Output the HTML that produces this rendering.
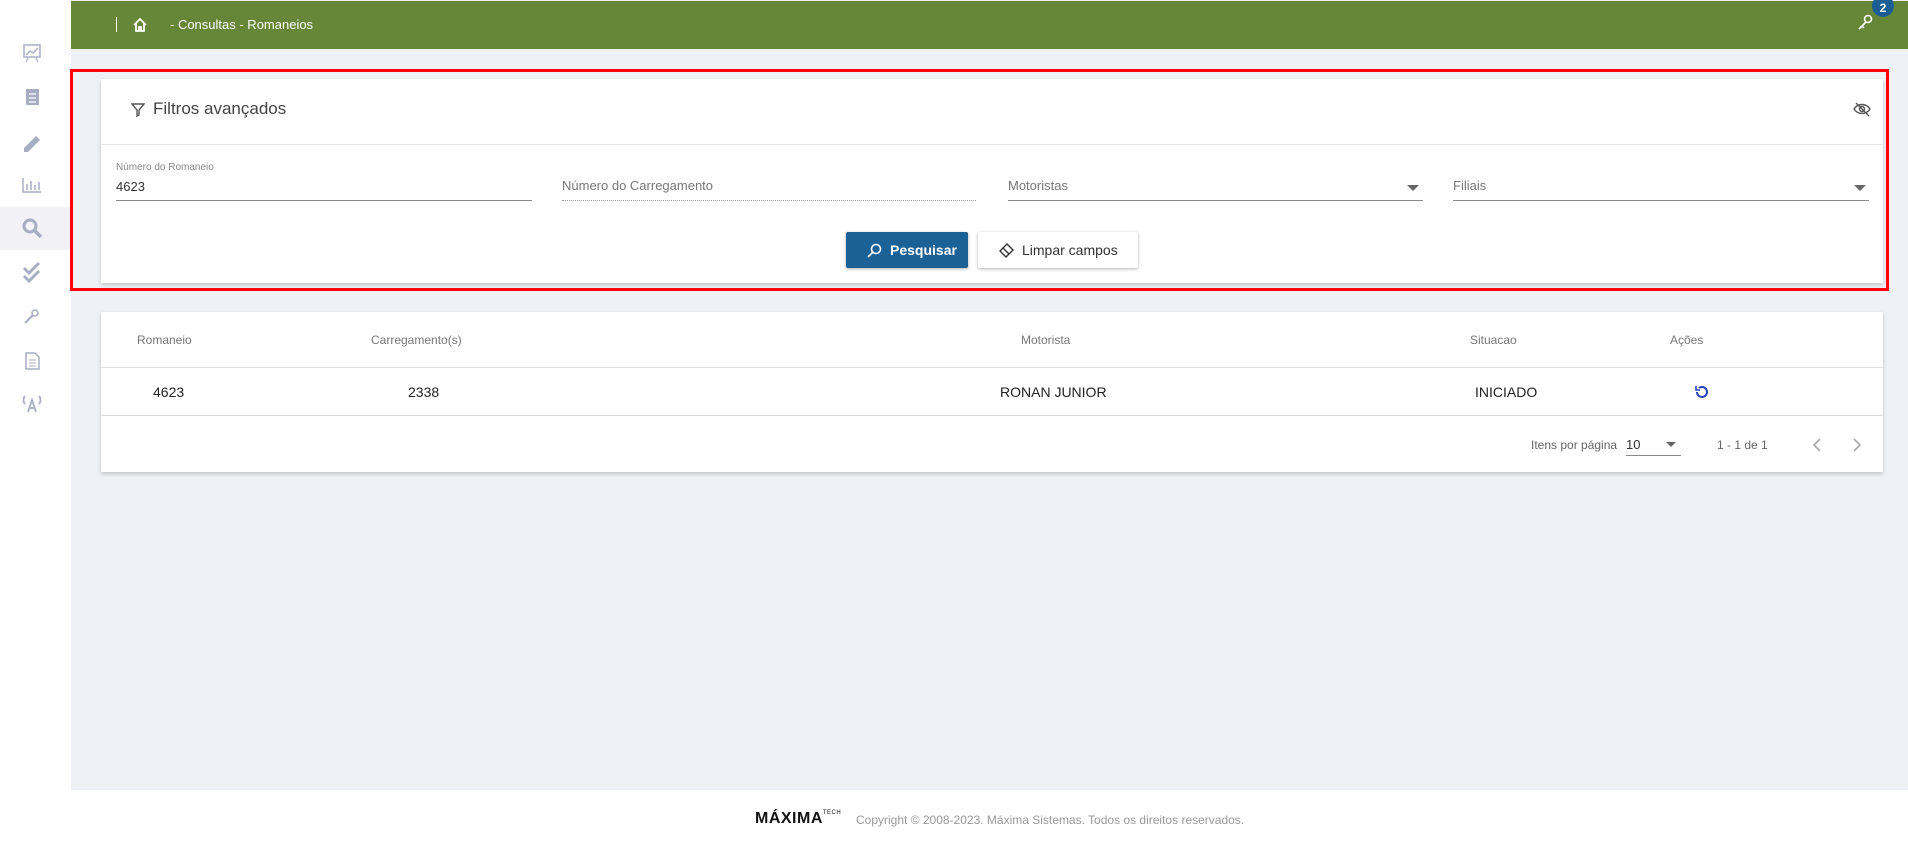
<!DOCTYPE html>
<html><head><meta charset="utf-8"><style>
*{box-sizing:border-box;margin:0;padding:0}
body{width:1908px;height:842px;overflow:hidden;background:#fff;font-family:"Liberation Sans",sans-serif;position:relative;color:#333}
.abs{position:absolute}
#side{left:0;top:0;width:71px;height:790px;background:#fff}
#main{left:71px;top:0;width:1837px;height:790px;background:#f0f1f6}
#hdr{left:71px;top:1px;width:1837px;height:48px;background:#658737}
.card{background:#fff;box-shadow:0 2px 4px rgba(0,0,0,.2)}
.t{position:absolute;white-space:nowrap}
.ul{position:absolute;height:1px;background:#8a8a8a}
.arr{position:absolute;width:0;height:0;border-left:6px solid transparent;border-right:6px solid transparent;border-top:6px solid #666}
</style></head><body>
<div id="side" class="abs"></div>
<div class="abs" style="left:0;top:207px;width:71px;height:43px;background:#f2f2f6"></div>
<svg class="abs" style="left:0;top:0" width="71" height="420" fill="none" stroke="#a9adc4" stroke-width="2">
<rect x="24" y="45" width="16" height="12" stroke-width="1.5"/><path d="M26 55l4-4 3 2 5-5M28 58l-2 4M36 58l2 4" stroke-width="1.3"/>
<rect x="26" y="89" width="13" height="16" fill="#a9adc4" stroke="none"/><path d="M29 94h7M29 98h7M29 102h7" stroke="#fff" stroke-width="1.3"/>
<path d="M24 148l12-12 4 4-12 12h-4z" fill="#a9adc4" stroke="none"/>
<path d="M23 178v14h18M27 190v-6M31 190v-9M35 190v-5M39 190v-8" stroke-width="1.5"/>
<circle cx="30" cy="226" r="6" stroke-width="3"/><path d="M35 231l6 6" stroke-width="3.5"/>
<path d="M24 268l5 5 10-10M24 276l5 5 10-10" stroke-width="3"/>
<circle cx="35" cy="313" r="3" stroke-width="1.5"/><path d="M33 315l-8 8" stroke-width="2"/>
<path d="M26 353h9l4 4v12h-13z" stroke-width="1.5"/><path d="M29 360h7M29 363h7M29 366h7" stroke-width="1"/>
<path d="M25 396a6 6 0 0 0 0 8M39 396a6 6 0 0 1 0 8M28 412l4-12 4 12M29 408h6" stroke-width="1.8"/>
</svg>
<div id="main" class="abs"></div>
<div id="hdr" class="abs"></div>
<div class="abs" style="left:116px;top:17px;width:1px;height:15px;background:#fff"></div>
<svg class="abs" style="left:132px;top:17px" width="16" height="16" fill="none" stroke="#fff" stroke-width="1.8"><path d="M2 8l6-6 6 6M4 6v8h3v-4h2v4h3V6"/></svg>
<div class="t" style="left:170px;top:17px;color:#fff;font-size:13px">- Consultas - Romaneios</div>
<svg class="abs" style="left:1857px;top:13px" width="18" height="18" fill="none" stroke="#fff" stroke-width="1.6"><circle cx="11" cy="6" r="3.5"/><path d="M9 9l-7 7M5 13l2 2"/></svg>
<div class="abs" style="left:1872px;top:-5px;width:22px;height:22px;border-radius:50%;background:#1c5e94;color:#fff;font-size:12px;font-weight:bold;text-align:center;line-height:26px">2</div>

<div class="abs" style="left:70px;top:69px;width:1819px;height:222px;border:3px solid #f00"></div>
<div class="abs card" style="left:101px;top:79px;width:1782px;height:204px"></div>
<div class="abs" style="left:101px;top:144px;width:1782px;height:1px;background:#e6e6ec"></div>
<svg class="abs" style="left:131px;top:103px" width="14" height="14" fill="none" stroke="#555" stroke-width="1.4"><path d="M1 1h12l-5 6v5l-2 1V7z"/></svg>
<div class="t" style="left:153px;top:99px;font-size:17px;color:#444">Filtros avançados</div>
<svg class="abs" style="left:1853px;top:101px" width="18" height="16" fill="none" stroke="#555" stroke-width="1.4"><path d="M1 8c4-6 12-6 16 0c-4 6-12 6-16 0z"/><circle cx="9" cy="8" r="2.5"/><path d="M3 2l13 13"/></svg>
<div class="t" style="left:116px;top:162px;font-size:10px;color:#888">Número do Romaneio</div>
<div class="t" style="left:116px;top:179px;font-size:13px;color:#333">4623</div>
<div class="ul" style="left:116px;top:200px;width:416px"></div>
<div class="t" style="left:562px;top:178px;font-size:13px;color:#777">Número do Carregamento</div>
<div class="abs" style="left:562px;top:200px;width:414px;border-top:1px dotted #999"></div>
<div class="t" style="left:1008px;top:178px;font-size:13px;color:#777">Motoristas</div>
<div class="ul" style="left:1008px;top:200px;width:415px"></div><div class="arr" style="left:1407px;top:185px"></div>
<div class="t" style="left:1453px;top:178px;font-size:13px;color:#777">Filiais</div>
<div class="ul" style="left:1453px;top:200px;width:416px"></div><div class="arr" style="left:1854px;top:185px"></div>
<div class="abs" style="left:846px;top:232px;width:122px;height:36px;background:#1c6196;border-radius:2px;box-shadow:0 1px 3px rgba(0,0,0,.3)"></div>
<svg class="abs" style="left:867px;top:243px" width="15" height="15" fill="none" stroke="#fff" stroke-width="1.6"><circle cx="9" cy="6" r="4.5"/><path d="M6 9l-5 5"/></svg>
<div class="t" style="left:890px;top:242px;font-size:14px;font-weight:bold;color:#fff">Pesquisar</div>
<div class="abs" style="left:978px;top:232px;width:160px;height:36px;background:#fff;border-radius:2px;box-shadow:0 1px 3px rgba(0,0,0,.3)"></div>
<svg class="abs" style="left:999px;top:243px" width="15" height="15" fill="none" stroke="#333" stroke-width="1.4"><path d="M8 1l6 6-7 7-6-6zM4 5l6 6"/></svg>
<div class="t" style="left:1022px;top:242px;font-size:14px;color:#333">Limpar campos</div>

<div class="abs card" style="left:101px;top:312px;width:1782px;height:160px"></div>
<div class="abs" style="left:101px;top:367px;width:1782px;height:1px;background:#e0e0e0"></div>
<div class="abs" style="left:101px;top:415px;width:1782px;height:1px;background:#d8d8d8"></div>
<div class="t" style="left:137px;top:333px;font-size:12px;color:#777">Romaneio</div>
<div class="t" style="left:371px;top:333px;font-size:12px;color:#777">Carregamento(s)</div>
<div class="t" style="left:1021px;top:333px;font-size:12px;color:#777">Motorista</div>
<div class="t" style="left:1470px;top:333px;font-size:12px;color:#777">Situacao</div>
<div class="t" style="left:1670px;top:333px;font-size:12px;color:#777">Ações</div>
<div class="t" style="left:153px;top:384px;font-size:14px;color:#222">4623</div>
<div class="t" style="left:408px;top:384px;font-size:14px;color:#222">2338</div>
<div class="t" style="left:1000px;top:384px;font-size:14px;color:#222">RONAN JUNIOR</div>
<div class="t" style="left:1475px;top:384px;font-size:14px;color:#222">INICIADO</div>
<svg class="abs" style="left:1694px;top:385px" width="15" height="15" fill="none" stroke="#2443b8" stroke-width="2"><path d="M3 7a5 5 0 1 0 2-4"/><path d="M2 1v4h4" stroke-width="1.6"/></svg>
<div class="t" style="left:1531px;top:438px;font-size:12px;color:#666">Itens por página</div>
<div class="t" style="left:1626px;top:437px;font-size:13px;color:#333">10</div>
<div class="ul" style="left:1626px;top:455px;width:55px"></div><div class="arr" style="left:1666px;top:442px;border-width:5px 5px 0"></div>
<div class="t" style="left:1717px;top:438px;font-size:12px;color:#666">1 - 1 de 1</div>
<svg class="abs" style="left:1808px;top:437px" width="60" height="16" fill="none" stroke="#aaa" stroke-width="1.6"><path d="M12 2l-6 6 6 6M46 2l6 6-6 6"/></svg>

<div class="t" style="left:755px;top:810px;font-size:16px;font-weight:bold;color:#111;letter-spacing:0.5px">MÁXIMA<span style="font-size:6px;font-weight:normal;vertical-align:top">TECH</span></div>
<div class="t" style="left:856px;top:813px;font-size:12px;color:#999">Copyright © 2008-2023. Máxima Sistemas. Todos os direitos reservados.</div>
</body></html>
